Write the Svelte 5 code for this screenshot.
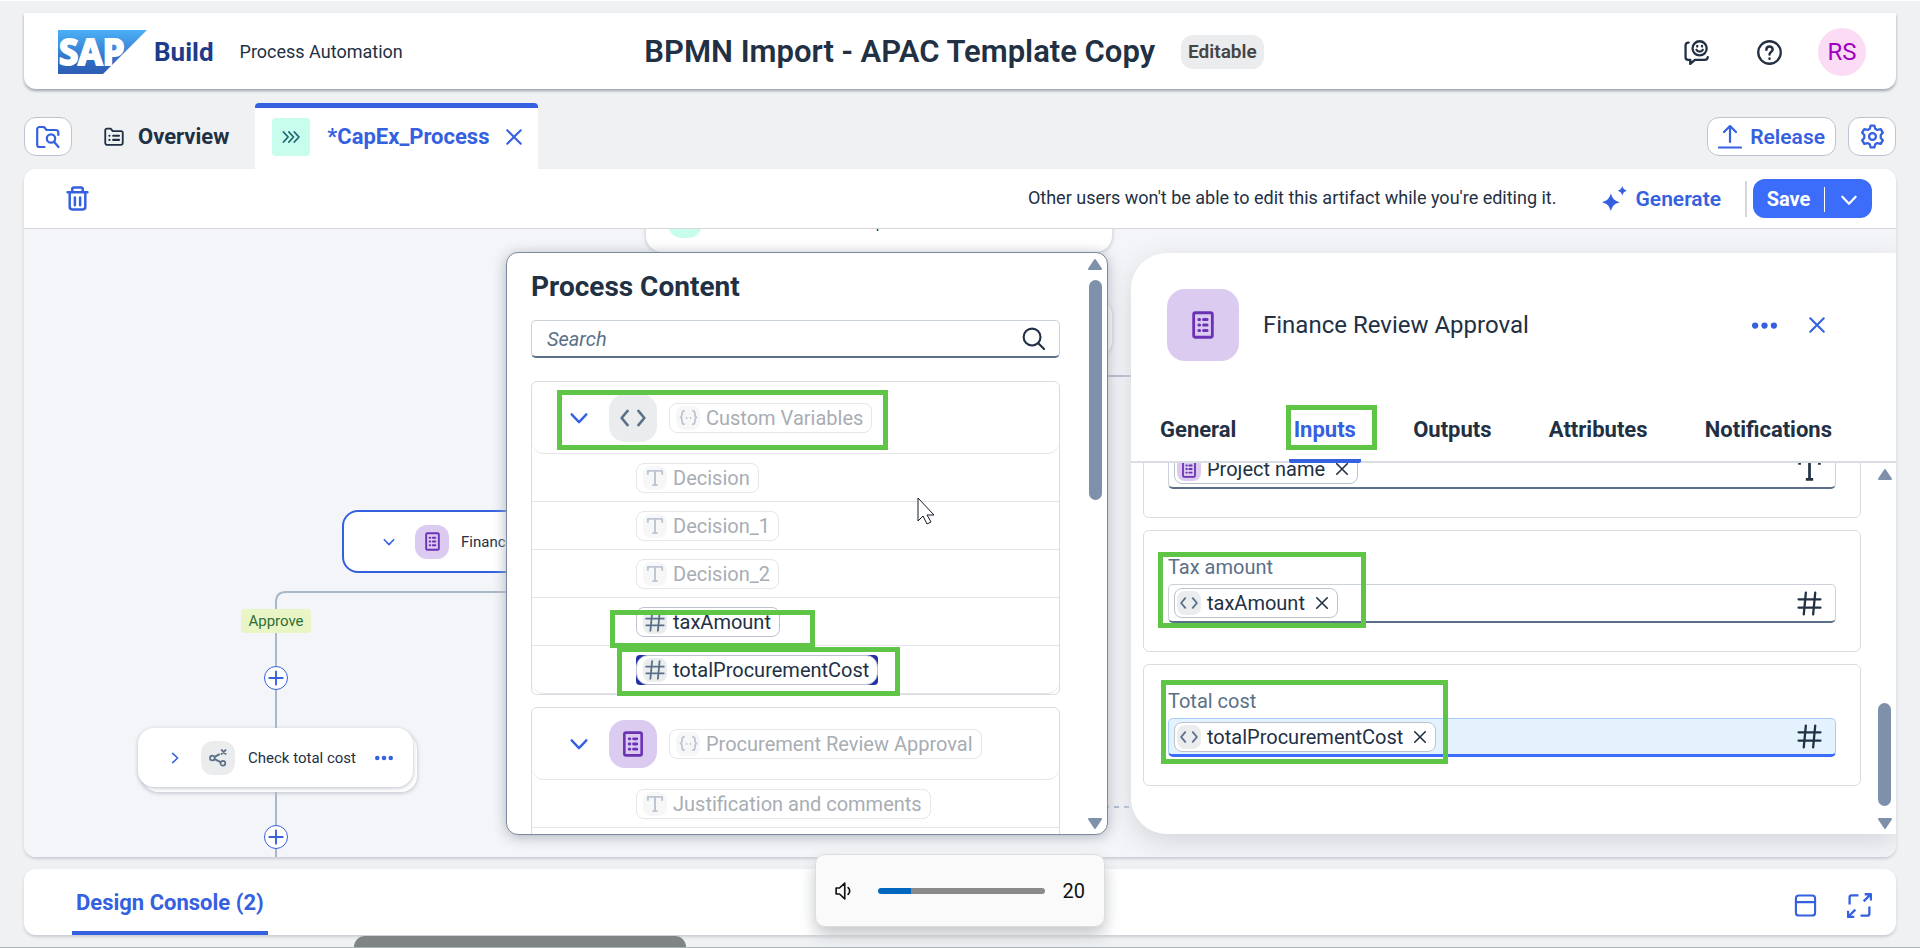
<script>
  const tabs = ['General', 'Inputs', 'Outputs', 'Attributes', 'Notifications'];
  let active = $state('Inputs');
  let query = $state('');
  let volume = $state(20);

  const groups = [
    {
      name: 'Custom Variables',
      icon: 'code',
      marked: true,
      rows: [
        { type: 'text', name: 'Decision' },
        { type: 'text', name: 'Decision_1' },
        { type: 'text', name: 'Decision_2' },
        { type: 'number', name: 'taxAmount', enabled: true, mark: 'tax' },
        { type: 'number', name: 'totalProcurementCost', enabled: true, focused: true, mark: 'total' }
      ]
    },
    {
      name: 'Procurement Review Approval',
      icon: 'form',
      rows: [
        { type: 'text', name: 'Justification and comments' },
        { type: 'text', name: '' }
      ]
    }
  ];

  const fields = [
    { id: 'project', label: '', chip: 'Project name', source: 'form', type: 'text' },
    { id: 'tax', label: 'Tax amount', chip: 'taxAmount', source: 'code', type: 'number', mark: 'field-tax' },
    { id: 'total', label: 'Total cost', chip: 'totalProcurementCost', source: 'code', type: 'number', mark: 'field-total', focused: true }
  ];
</script>

{#snippet icon(name, size)}
  <svg class="icon" width={size} height={size} viewBox="0 0 24 24" fill="none" stroke="currentColor" stroke-width="2.200" stroke-linecap="round" stroke-linejoin="round" aria-hidden="true">
    {#if name === 'folder-search'}
      <path d="M8.500 22H3.500a2.300 2.300 0 0 1-2.300-2.300V4.300A2.300 2.300 0 0 1 3.500 2H8l2.500 3H20a2.300 2.300 0 0 1 2.300 2.300V10" />
      <circle cx="15" cy="13.500" r="4.200" /><path d="M18.200 17l4.300 5" />
    {:else if name === 'folder-list'}
      <path d="M1.500 19V4a2 2 0 0 1 2-2H8l2.500 3h10a2 2 0 0 1 2 2v12a2.500 2.500 0 0 1-2.500 2.500H4A2.500 2.500 0 0 1 1.500 19z" />
      <path d="M11 10.500h7M11 15.500h7M6.500 10.500h.1M6.500 15.500h.1" stroke-width="2.600" />
    {:else if name === 'process'}
      <path d="M3 6l5.500 6L3 18M9.500 6l5.500 6-5.500 6M16 6l5.500 6-5.500 6" />
    {:else if name === 'close'}
      <path d="M3 3l18 18M21 3L3 21" stroke-width="2.800" />
    {:else if name === 'trash'}
      <path d="M2.500 6h19M7 5.500V3a1.500 1.500 0 0 1 1.500-1.500h7A1.500 1.500 0 0 1 17 3v2.500M4.500 6v14a2.500 2.500 0 0 0 2.500 2.500h10a2.500 2.500 0 0 0 2.500-2.500V6M9.500 11v7.500M14.500 11v7.500" stroke-width="2.400" />
    {:else if name === 'upload'}
      <path d="M12 17V1.500M6 7l6-6 6 6M1 22.500h22" />
    {:else if name === 'gear'}
      <path d="M10.200 1.500h3.600l.8 3 2.100 1.200 3.200-.8 2 3.400-2 2.300v2.800l2 2.300-2 3.400-3.200-.8-2.100 1.200-.8 3h-3.600l-.8-3-2.100-1.200-3.200.8-2-3.400 2-2.300v-2.800l-2-2.300 2-3.400 3.200.8 2.100-1.200z" />
      <circle cx="12" cy="12" r="3.300" />
    {:else if name === 'feedback'}
      <path d="M4.500 2.500H4A2.500 2.500 0 0 0 1.500 5v11.500A2.500 2.500 0 0 0 4 19h2v4l4.500-4H20a2.800 2.800 0 0 0 2.800-2.500" />
      <circle cx="15" cy="8" r="6.800" /><path d="M12 9.500c1 2.300 5 2.300 6 0M12.700 5.700v.6M17.300 5.700v.6" />
    {:else if name === 'help'}
      <circle cx="12" cy="12" r="10.800" /><path d="M9 9.300c0-4 6-4 6-.3 0 2.500-3 2.300-3 5M12 17.800v.1" stroke-width="2.400" />
    {:else if name === 'sparkle'}
      <path fill="currentColor" stroke="none" d="M8.500 7c1.600 5.200 3.300 7.100 8.500 8.600-5.200 1.600-6.900 3.300-8.500 8.400-1.600-5.100-3.300-6.800-8.500-8.400C5.200 14.100 6.900 12.200 8.500 7zM19.500 0c.8 2.700 1.800 3.700 4.500 4.500-2.700.8-3.700 1.800-4.500 4.500-.8-2.700-1.800-3.700-4.500-4.500C17.700 3.700 18.700 2.700 19.500 0z" />
    {:else if name === 'down'}
      <path d="M4 8l8 8.500L20 8" stroke-width="2.600" />
    {:else if name === 'right'}
      <path d="M8 4l8.500 8L8 20" stroke-width="2.600" />
    {:else if name === 'search'}
      <circle cx="10.500" cy="10.500" r="8.800" /><path d="M17 17l6 6" />
    {:else if name === 'code'}
      <path d="M7 5.500L1.500 12 7 18.500M17 5.500l5.500 6.500-5.500 6.500" stroke-width="2.400" />
    {:else if name === 'braces'}
      <path d="M6.500 3.500C1.500 3.500 6 11 1.800 12 6 13 1.500 20.500 6.500 20.500M17.500 3.500C22.500 3.500 18 11 22.200 12 18 13 22.500 20.500 17.500 20.500M9.500 12.500h.1M14.500 12.500h.1" />
    {:else if name === 'text'}
      <path d="M2.500 7.500v-5h19v5M12 2.500v19M8.500 21.500h7" stroke-linecap="butt" stroke-width="2.600" />
    {:else if name === 'number'}
      <path d="M8.500 1.500L6.500 22.500M17.500 1.500L15.500 22.500M1.500 8h21M1.500 16h21" />
    {:else if name === 'form'}
      <rect x="4" y="1.500" width="16" height="21" rx="1.500" stroke-width="2.400" />
      <path d="M8.500 7.200h.6M12.500 7.200h3M8.500 12h.6M12.500 12h3M8.500 16.800h.6M12.500 16.800h3" stroke-width="2.600" />
    {:else if name === 'branch'}
      <circle cx="4.500" cy="12" r="3.200" /><circle cx="18.500" cy="19" r="3.200" />
      <path d="M7.500 10.500l6-3.200M7.500 13.500l8 4M17 1.500l5 5M22 1.500l-5 5" stroke-width="2.600" />
    {:else if name === 'dots'}
      <g fill="currentColor" stroke="none"><circle cx="3" cy="12" r="3" /><circle cx="12" cy="12" r="3" /><circle cx="21" cy="12" r="3" /></g>
    {:else if name === 'plus'}
      <path d="M12 2v20M2 12h20" stroke-width="2.800" />
    {:else if name === 'window'}
      <rect x="2" y="1.500" width="20" height="21" rx="3" /><path d="M2 8.500h20" />
    {:else if name === 'expand'}
      <path d="M2.500 11V4a1.800 1.800 0 0 1 1.800-1.800H11M21.500 13v7a1.800 1.800 0 0 1-1.800 1.800H13M16 8l6.500-6.500M17 1.200h6v6M8 16l-6.500 6.500M1 17v6h6" stroke-linecap="butt" />
    {:else if name === 'speaker'}
      <path d="M1.500 8v8H6l7 6.500v-21L6 8z" /><path d="M17.500 7.500c2.800 2.500 2.800 6.500 0 9" />
    {/if}
  </svg>
{/snippet}

{#snippet arrow(dir)}
  <svg class="icon" width="16" height="13" viewBox="0 0 16 13" fill="#7f91aa" stroke="#7f91aa" stroke-width="2" stroke-linejoin="round" aria-hidden="true">
    {#if dir === 'up'}<path d="M8 2L2 11h12z" />{:else}<path d="M8 11L2 2h12z" />{/if}
  </svg>
{/snippet}

<div class="page">
  <header class="shell">
    <div class="brand">
      <svg width="89" height="44" viewBox="0 0 89 44" role="img" aria-label="SAP">
        <defs>
          <linearGradient id="sap" x1="0" y1="0" x2="0" y2="1">
            <stop offset="0" stop-color="#4bb0f7" /><stop offset="0.800" stop-color="#2e66bd" /><stop offset="1" stop-color="#2d5fb4" />
          </linearGradient>
        </defs>
        <path d="M0 0h89L45 44H0z" fill="url(#sap)" />
        <text x="1" y="35" class="sap">SAP</text>
      </svg>
      <strong class="product">Build</strong>
      <span class="area">Process Automation</span>
    </div>
    <div class="project">
      <h1>BPMN Import - APAC Template Copy</h1>
      <span class="state">Editable</span>
    </div>
    <div class="user">
      <button class="plain dark" aria-label="Feedback">{@render icon('feedback', 25)}</button>
      <button class="plain dark" aria-label="Help">{@render icon('help', 25)}</button>
      <button class="avatar">RS</button>
    </div>
  </header>

  <nav class="artifacts">
    <button class="boxed" aria-label="Browse artifacts">{@render icon('folder-search', 24)}</button>
    <button class="overview">{@render icon('folder-list', 20)}<span>Overview</span></button>
    <div class="open-tab">
      <button class="tab-name"><span class="mint">{@render icon('process', 20)}</span><span>*CapEx_Process</span></button>
      <button class="plain" aria-label="Close">{@render icon('close', 18)}</button>
    </div>
    <div class="actions">
      <button class="boxed release">{@render icon('upload', 24)}<span>Release</span></button>
      <button class="boxed" aria-label="Settings">{@render icon('gear', 25)}</button>
    </div>
  </nav>

  <main class="editor">
    <div class="toolbar">
      <button class="plain" aria-label="Delete">{@render icon('trash', 25)}</button>
      <p>Other users won't be able to edit this artifact while you're editing it.</p>
      <button class="generate">{@render icon('sparkle', 25)}<span>Generate</span></button>
      <div class="save">
        <button>Save</button>
        <button class="more" aria-label="More save options">{@render icon('down', 20)}</button>
      </div>
    </div>

    <div class="canvas">
      <svg class="edges" width="100%" height="100%" aria-hidden="true">
        <path d="M600 363H262q-10 0-10 10V700" /><path d="M1060 147h60" /><path d="M1060 578h60" class="dashed" />
      </svg>
      <div class="node trigger"><span class="dot"></span><span class="trigger-name">CapEx</span></div>
      <div class="node side"></div>
      <div class="node finance">
        {@render icon('down', 14)}
        <span class="tile purple small">{@render icon('form', 19)}</span>
        <span>Finance Review Approval</span>
      </div>
      <span class="approve">Approve</span>
      <button class="add first" aria-label="Add step">{@render icon('plus', 16)}</button>
      <div class="node back"></div>
      <div class="node check">
        {@render icon('right', 14)}
        <span class="tile gray small">{@render icon('branch', 18)}</span>
        <span class="grow">Check total cost</span>
        <button class="plain" aria-label="Step menu">{@render icon('dots', 18)}</button>
      </div>
      <button class="add second" aria-label="Add step">{@render icon('plus', 16)}</button>

      <section class="drawer">
        <div class="drawer-head">
          <span class="tile purple large">{@render icon('form', 28)}</span>
          <h2>Finance Review Approval</h2>
          <button class="plain" aria-label="Actions">{@render icon('dots', 25)}</button>
          <button class="plain" aria-label="Close panel">{@render icon('close', 18)}</button>
        </div>
        <div class="tabs" role="tablist">
          {#each tabs as tab}
            <button role="tab" aria-selected={active === tab} class:active={active === tab} onclick={() => (active = tab)}>
              {tab}
              {#if tab === 'Inputs'}<i class="mark inputs"></i>{/if}
            </button>
          {/each}
        </div>
        <div class="drawer-body">
          <div class="cards">
            {#each fields as f}
              <div class="card">
                <label for={f.id}>{f.label}</label>
                <div class="field" class:focused={f.focused}>
                  <span class="chip enabled">
                    <span class="kind" class:purple={f.source === 'form'}>{@render icon(f.source, 18)}</span>
                    <span>{f.chip}</span>
                    <button class="remove" aria-label="Remove">{@render icon('close', 14)}</button>
                  </span>
                  <input id={f.id} type="text" aria-label={f.label || f.chip} />
                  {@render icon(f.type, 25)}
                </div>
                {#if f.mark}<i class="mark {f.mark}"></i>{/if}
              </div>
            {/each}
          </div>
          <div class="scroll">
            {@render arrow('up')}<span class="thumb low"></span>{@render arrow('down')}
          </div>
        </div>
      </section>

      <section class="picker">
        <div class="picker-body">
          <h3>Process Content</h3>
          <div class="searchbox">
            <input type="text" placeholder="Search" aria-label="Search" bind:value={query} />
            {@render icon('search', 23)}
          </div>
          {#each groups as g}
            <div class="group">
              <div class="group-head">
                <button class="plain" aria-label="Toggle group">{@render icon('down', 22)}</button>
                <span class="tile medium" class:purple={g.icon === 'form'} class:gray={g.icon === 'code'}>{@render icon(g.icon, 26)}</span>
                <span class="chip"><span class="kind">{@render icon('braces', 19)}</span><span>{g.name}</span></span>
                {#if g.marked}<i class="mark custom"></i>{/if}
              </div>
              {#each g.rows as r}
                <div class="row">
                  {#if r.name}
                    <span class="chip" class:enabled={r.enabled} class:corners={r.focused}>
                      <span class="kind">{@render icon(r.type, r.type === 'number' ? 20 : 18)}</span><span>{r.name}</span>
                    </span>
                  {/if}
                  {#if r.mark}<i class="mark {r.mark}"></i>{/if}
                </div>
              {/each}
            </div>
          {/each}
        </div>
        <div class="scroll">
          {@render arrow('up')}<span class="thumb high"></span>{@render arrow('down')}
        </div>
      </section>

      <svg class="cursor" width="18" height="28" viewBox="0 0 18 28" aria-hidden="true">
        <path d="M1 1v23l5-5 4 8 4-2-4-7h7z" fill="#fff" stroke="#111827" stroke-width="1" />
      </svg>
    </div>
  </main>

  <footer class="console">
    <button class="console-tab">Design Console (2)</button>
    <div class="console-tools">
      <button class="plain" aria-label="Dock">{@render icon('window', 23)}</button>
      <button class="plain" aria-label="Full screen">{@render icon('expand', 25)}</button>
    </div>
  </footer>
  <div class="shade"></div>

  <label class="volume">
    {@render icon('speaker', 18)}
    <input type="range" min="0" max="100" bind:value={volume} aria-label="Volume" style="--level: {volume}%" />
    <span>{volume}</span>
  </label>
</div>

<style>
  :global(body) { margin: 0; background: #eff1f3; }
  * { box-sizing: border-box; }
  .page {
    position: relative; display: flex; flex-direction: column; height: 100vh; min-height: 760px; overflow: hidden;
    padding: 12px 24px; border-top: 1px solid #fff; border-bottom: 1px solid #a9b4b6;
    background: #eff1f3; color: #223044; font-family: Roboto, "Liberation Sans", sans-serif; font-size: 20px; line-height: 24px;
  }
  button, input { font: inherit; color: inherit; }
  button { display: flex; align-items: center; justify-content: center; margin: 0; padding: 0; border: 0; background: none; cursor: pointer; }
  h1, h2, h3, p { margin: 0; }
  .icon { display: block; flex: none; }
  .plain { color: #3560e0; }
  .plain.dark { color: #223044; }

  .shell {
    display: grid; grid-template-columns: 1fr auto 1fr; align-items: center; flex: none; height: 76px; padding: 2px 30px 0 34px;
    background: #fff; border-radius: 0 0 12px 12px; box-shadow: 0 2px 3px #9da5ad;
  }
  .brand, .project, .user { display: flex; align-items: center; }
  .sap { font-family: "Open Sans", sans-serif; font-weight: 700; font-size: 35px; fill: #fff; stroke: #fff; stroke-width: 2px; }
  .product { margin-left: 7px; color: #1e3a8a; font-size: 26px; }
  .area { margin-left: 26px; font-size: 18px; }
  .project { gap: 26px; padding-right: 16px; }
  h1 { font-size: 31px; line-height: 36px; font-weight: 600; }
  .state { padding: 6px 7px; border-radius: 12px; background: #eaecee; color: #454545; font-size: 19px; line-height: 22px; font-weight: 600; }
  .user { justify-content: flex-end; gap: 48px; }
  .avatar { width: 48px; height: 48px; margin-left: -12px; border-radius: 50%; background: #fbdcf4; color: #a100c2; font-size: 24px; }

  .artifacts { display: flex; align-items: flex-end; flex: none; height: 80px; }
  .boxed { width: 48px; height: 39px; margin-bottom: 13px; border: 1px solid #bcc3cf; border-radius: 12px; background: #fff; color: #3560e0; }
  .overview { gap: 14px; height: 39px; margin: 0 26px 13px 32px; font-size: 22px; font-weight: 700; }
  .open-tab { display: flex; align-items: center; gap: 16px; height: 66px; padding: 0 15px 3px 17px; border-top: 5px solid #3560e0; border-radius: 4px 4px 0 0; background: #fff; }
  .tab-name { gap: 17px; color: #3560e0; font-size: 22px; font-weight: 700; }
  .mint { display: grid; place-items: center; width: 38px; height: 38px; border-radius: 4px; background: #c8fcec; color: #1f6873; }
  .actions { display: flex; gap: 12px; margin-left: auto; }
  .release { gap: 8px; width: auto; padding: 0 10px; font-size: 21px; font-weight: 600; }

  .editor { display: flex; flex-direction: column; flex: 1; min-height: 0; overflow: hidden; border-radius: 12px; background: #fff; box-shadow: 0 2px 3px #c9ced4; }
  .toolbar { display: flex; align-items: center; flex: none; height: 60px; padding: 0 24px 0 41px; border-bottom: 1px solid #d5d7da; }
  .toolbar p { margin-left: auto; padding-bottom: 2px; font-size: 18px; }
  .generate { gap: 9px; margin: 0 24px 0 45px; color: #3560e0; font-size: 21px; font-weight: 600; }
  .save { display: flex; position: relative; height: 39px; margin-left: 8px; border-radius: 12px; background: #3b6cfa; color: #fff; font-weight: 700; }
  .save::before { content: ""; position: absolute; left: -8px; top: 2px; width: 2px; height: 36px; background: #d5d7da; }
  .save button { width: 71px; }
  .save .more { width: 48px; height: 25px; margin-top: 8px; border-left: 1px solid #fff; }

  .canvas { position: relative; flex: 1; overflow: hidden; background: #f4f5f8; font-size: 15px; }
  .edges { position: absolute; inset: 0; }
  .edges path { fill: none; stroke: #a9b7c8; stroke-width: 2; }
  .edges .dashed { stroke-dasharray: 5 5; }
  .node { position: absolute; display: flex; align-items: center; border-radius: 16px; background: #fff; box-shadow: 0 1px 4px #b9bec8; white-space: nowrap; }
  .trigger { left: 622px; top: -40px; width: 466px; height: 63px; padding: 0 22px; }
  .dot { width: 34px; height: 34px; border-radius: 14px; background: #c8fcec; }
  .trigger-name { flex: 1; padding: 4px 34px 0 0; text-align: center; }
  .side { left: 900px; top: 70px; width: 188px; height: 58px; }
  .finance { left: 318px; top: 281px; width: 276px; height: 63px; padding-left: 38px; gap: 19px; border: 2px solid #3560e0; box-shadow: none; }
  .finance > :global(svg), .check > :global(svg) { color: #3560e0; }
  .finance > :last-child { margin-left: -7px; }
  .approve { position: absolute; left: 217px; top: 380px; width: 70px; border-radius: 4px; background: #eaf5c6; color: #2d6e35; text-align: center; }
  .add { position: absolute; left: 240px; width: 24px; height: 24px; border: 1px solid #3560e0; border-radius: 50%; background: #fff; color: #3560e0; }
  .first { top: 437px; }
  .second { top: 596px; }
  .check { left: 114px; top: 499px; width: 275px; height: 59px; padding: 0 20px 0 30px; gap: 13px; }
  .check .tile { margin-left: 6px; }
  .back { left: 118px; top: 504px; width: 275px; height: 59px; }
  .grow { flex: 1; }
  .tile { display: grid; place-items: center; flex: none; }
  .purple { background: #dccbf1; color: #6c32b4; }
  .gray { background: #eaecee; color: #5b7088; }
  .small { width: 34px; height: 34px; border-radius: 12px; }
  .medium { width: 48px; height: 48px; border-radius: 16px; }
  .large { width: 72px; height: 72px; border-radius: 18px; }

  .chip { position: relative; display: flex; align-items: center; gap: 6px; height: 30px; padding: 0 8px 0 6px; border: 1px solid #e4e6ea; border-radius: 8px; background: #fff; color: #a8adb4; white-space: nowrap; }
  .kind { display: grid; place-items: center; width: 24px; height: 24px; border-radius: 8px; background: #f7f7f8; color: #bcc5d0; }
  .enabled { border-color: #bcc3cf; color: #223044; }
  .enabled .kind { background: #eaecee; color: #5b7088; }
  .enabled .kind.purple { background: #dccbf1; color: #6c32b4; }
  .field .chip { padding-left: 2px; }
  .remove { width: 14px; height: 14px; margin-left: 4px; }
  .mark { position: absolute; border: 5px solid #5ec547; pointer-events: none; z-index: 2; }

  .drawer {
    position: absolute; top: 24px; right: 0; bottom: 23px; display: flex; flex-direction: column; width: 765px; overflow: hidden;
    border-radius: 36px 0 0 36px; background: #fff; font-size: 20px;
  }
  .canvas::after { content: ""; position: absolute; top: 24px; right: 0; bottom: 23px; width: 765px; border-radius: 36px 0 0 36px; box-shadow: 0 8px 28px #d2d5da; }
  .drawer, .picker { z-index: 1; }
  .drawer-head { display: flex; align-items: center; flex: none; gap: 31px; height: 144px; padding: 0 70px 0 36px; }
  h2 { flex: 1; margin-left: -7px; font-size: 24px; line-height: 30px; font-weight: 400; }
  .tabs { display: flex; justify-content: space-between; flex: none; height: 66px; padding: 0 59px 0 24px; border-bottom: 2px solid #dadde1; }
  .tabs button { position: relative; height: 66px; padding: 3px 5px 0; border-bottom: 4px solid transparent; font-size: 22px; font-weight: 700; }
  .tabs .active { border-color: #3560e0; border-radius: 2px; color: #3560e0; }
  .inputs { left: -3px; top: 8px; width: 91px; height: 45px; }
  .drawer-body { display: flex; flex: 1; min-height: 0; }
  .cards { display: flex; flex: 1; flex-direction: column; justify-content: flex-end; gap: 12px; overflow: hidden; padding: 0 0 48px 12px; }
  .card { position: relative; flex: none; height: 122px; padding: 24px; border: 1px solid #d9dce0; border-radius: 6px; }
  .card label { display: block; height: 29px; color: #5b7088; }
  .field { display: flex; align-items: center; height: 39px; padding: 0 13px 0 5px; border: 1px solid #ccd2da; border-bottom: 2px solid #5b7088; border-radius: 5px; }
  .field.focused { border-color: #a6cdfb; border-bottom: 3px solid #3b6cfa; background: #e3f2fd; }
  .field input { flex: 1; min-width: 0; border: 0; outline: 0; background: none; }
  .field-tax { left: 14px; top: 21px; width: 208px; height: 76px; }
  .field-total { left: 17px; top: 15px; width: 287px; height: 84px; }
  .scroll { display: flex; flex-direction: column; align-items: center; flex: none; padding: 5px 0 4px; }
  .drawer .scroll { width: 35px; padding-left: 12px; }
  .thumb { width: 13px; border-radius: 7px; background: #7f91aa; }
  .thumb.low { height: 103px; margin: auto 0 11px; }
  .thumb.high { height: 220px; margin: 9px 0 auto; }

  .picker {
    position: absolute; left: 482px; top: 23px; bottom: 22px; display: flex; width: 602px; overflow: hidden;
    border: 1px solid #7b899c; border-radius: 12px; background: #fff; box-shadow: 0 2px 14px #aeb4bd; font-size: 20px;
  }
  .picker-body { flex: 1; padding: 19px 0 0 24px; }
  h3 { font-size: 28px; line-height: 30px; font-weight: 700; }
  .searchbox { display: flex; align-items: center; height: 38px; margin: 18px 0 23px; padding: 0 14px 0 15px; border: 1px solid #ccd2da; border-bottom: 2px solid #5b7088; border-radius: 5px; }
  .searchbox input { flex: 1; min-width: 0; padding: 0; border: 0; outline: 0; background: none; }
  .searchbox input::placeholder { color: #5b7088; opacity: 1; font-style: italic; }
  .group { margin-bottom: 12px; border: 1px solid #d9dce0; border-radius: 6px; }
  .group-head { position: relative; display: flex; align-items: center; gap: 12px; height: 72px; padding-left: 36px; border-bottom: 1px solid #e2e4e8; border-radius: 0 0 12px 12px; }
  .group-head .tile { margin-left: 7px; }
  .row { position: relative; display: flex; align-items: center; height: 48px; padding-left: 104px; border-bottom: 1px solid #e2e4e8; }
  .row:last-child { border-radius: 0 0 12px 12px; }
  .row:has(.corners) { z-index: 0; }
  .corners { border-radius: 12px; }
  .corners::before { content: ""; position: absolute; inset: -1px; z-index: -1; background: #2430a8; border-radius: 4px; }
  .custom { left: 25px; top: 8px; width: 331px; height: 60px; }
  .tax { left: 78px; top: 12px; width: 205px; height: 38px; }
  .total { left: 85px; top: 1px; width: 283px; height: 49px; }
  .picker .scroll { width: 24px; margin-left: 23px; }

  .cursor { position: absolute; left: 893px; top: 268px; z-index: 2; }

  .console { display: flex; align-items: stretch; justify-content: space-between; flex: none; height: 66px; margin-top: 12px; padding: 0 24px 0 48px; border-radius: 12px; background: #fff; box-shadow: 0 2px 3px #c9ced4; }
  .console-tab { padding: 5px 4px 0; border-bottom: 4px solid #3560e0; color: #3560e0; font-size: 22px; font-weight: 700; }
  .console-tools { display: flex; align-items: center; gap: 30px; padding-top: 6px; }
  .shade { position: absolute; left: 354px; bottom: 0; width: 332px; height: 11px; border-radius: 24px 24px 0 0; background: #7f8484; }
  .volume {
    position: absolute; left: 50%; bottom: 20px; z-index: 3; display: flex; align-items: center; gap: 18px; width: 290px; height: 73px; margin-left: -145px; padding: 0 19px;
    border: 1px solid #dcdddf; border-radius: 10px; background: #fafafa; color: #111; box-shadow: 0 8px 16px #c4c7ca;
  }
  .volume input {
    flex: 1; min-width: 0; height: 6px; margin: 0 0 0 7px; border-radius: 3px; appearance: none;
    background: linear-gradient(to right, #0067c0 var(--level), #8a8a8a var(--level));
  }
  .volume input::-webkit-slider-thumb { appearance: none; width: 0; height: 0; }
</style>
